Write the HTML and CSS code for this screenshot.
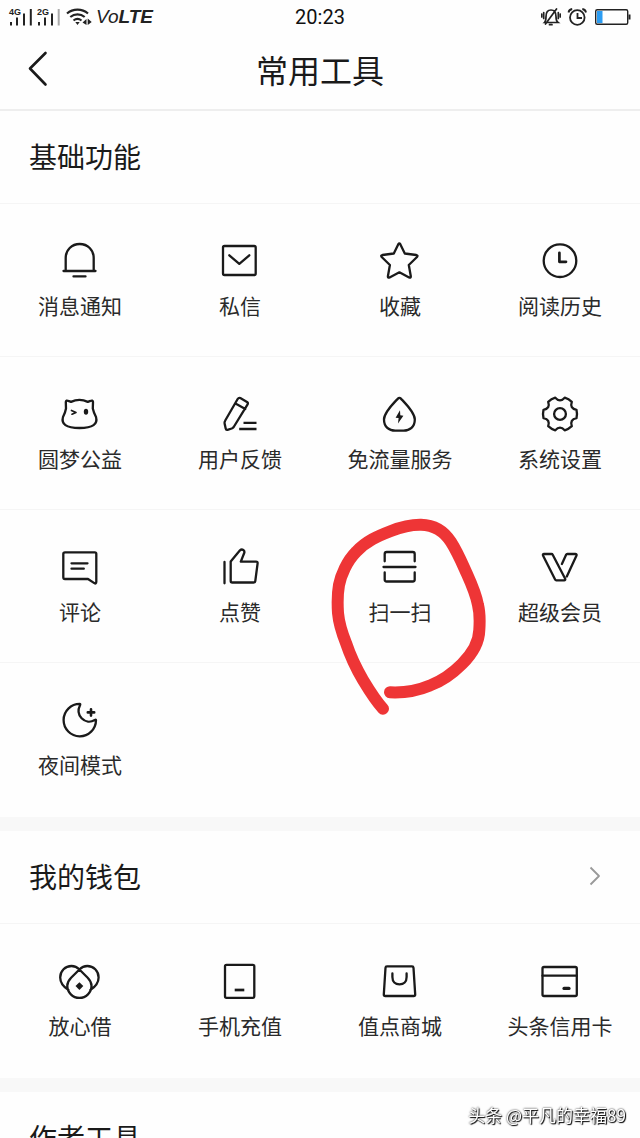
FILE: index.html
```html
<!DOCTYPE html>
<html lang="zh-CN">
<head>
<meta charset="utf-8">
<meta name="viewport" content="width=device-width, initial-scale=1">
<title>常用工具</title>
<link rel="stylesheet" href="styles.css">
</head>
<body>
<div class="screen">
  <div class="status">
    <div class="status-left">
      <svg class="signals" width="54" height="20" viewBox="8 6 54 20" aria-hidden="true">
        <path d="M11 21v3.500M17 16.500v8M24 12.500v12M30.800 8v16.500M39 21v3.500M45 16.500v8M52 12.500v12" stroke="#222" stroke-width="2"/>
        <path d="M58.700 8v16.500" stroke="#aaa" stroke-width="2"/>
        <text class="net" x="9" y="14">4G</text>
        <text class="net" x="37" y="14">2G</text>
      </svg>
      <svg width="26" height="20" viewBox="66 6 26 20" fill="none" stroke="#222" stroke-width="2.2" aria-hidden="true">
        <path d="M67 12.500C73 7.300 82 7.300 88 12.500M70.300 16C74.500 12.500 80.500 12.500 84.700 16M73.500 19.500C76 17.500 79 17.500 81.500 19.500"/>
        <path d="M75.300 21h4.400l-2.200 3zM82.500 21.500l4-3.500v6zM87.700 17.500l4 3.500-4 3z" fill="#222" stroke="none"/>
      </svg>
      <span class="volte">Vo<b>LTE</b></span>
    </div>
    <time class="clock">20:23</time>
    <div class="status-right">
      <svg width="20" height="20" viewBox="540 6 20 20" fill="none" stroke="#222" stroke-width="1.7" stroke-linecap="round" aria-hidden="true">
        <path d="M543.500 21.500h13.500c-2-1.500-2-3-2-6 0-4-2-6.500-5-6.500s-5 2.500-5 6.500c0 3 0 4.500-1.500 6zM555.500 8l-11 15M548.500 23.700h2.500M542.700 11.500v6M540.700 13v3M557.300 11.500v6M559.300 13v3"/>
      </svg>
      <svg width="20" height="20" viewBox="566 6 20 20" fill="none" stroke="#222" stroke-width="1.8" aria-hidden="true">
        <circle cx="576.3" cy="16.5" r="7.3"/>
        <path d="M576.500 12v5h4.500M567.500 11.500c.3-1.800 1.700-3.200 3.700-3.500M585 11.500c-.3-1.800-1.700-3.200-3.700-3.500"/>
      </svg>
      <svg class="battery" width="37" height="20" viewBox="595 6 37 20" aria-hidden="true">
        <rect x="595.7" y="8.7" width="32" height="14.6" rx="1.5" fill="none" stroke="#222" stroke-width="1.4"/>
        <path d="M597 10h5.500v12H597z" fill="#2b9cf2"/>
        <path d="M628.500 13.500h2v5h-2z" fill="#222"/>
      </svg>
    </div>
  </div>

  <header class="header">
    <button class="back" type="button" aria-label="返回">
      <svg width="20" height="36" viewBox="0 0 20 36" fill="none" stroke="#1a1a1a" stroke-width="2.6" stroke-linecap="round" stroke-linejoin="round"><path d="M17.500 2 2 17.500l15.500 16"/></svg>
    </button>
    <h1 class="title">常用工具</h1>
  </header>

  <main class="content">
    <section class="section">
      <h2 class="section-head">基础功能</h2>
      <div class="tiles">
        <a class="tile" href="#notice"><svg class="icon" viewBox="0 0 42 42"><path d="M6.700 31V18c0-8 6-14 14-14s14 6 14 14v13M4.500 31h32M14.500 36.400h12"/></svg><span>消息通知</span></a>
        <a class="tile" href="#message"><svg class="icon" viewBox="0 0 42 42"><rect x="4" y="6" width="32.7" height="29" rx="1.5"/><path d="m10.300 15.300 10 8.500 10-8.500"/></svg><span>私信</span></a>
        <a class="tile" href="#favorite"><svg class="icon" viewBox="0 0 42 42"><path d="M19.300 4.200q1-1.500 2 0l4.500 9.300 11.500 1.500q1.900.5.700 2L29.800 25l2 11.200q.1 1.900-1.700 1.200L20.400 32.300l-9.800 5.100q-1.800.7-1.700-1.200l2-11.200-8.200-8q-1.200-1.500.7-2l11.400-1.500z"/></svg><span>收藏</span></a>
        <a class="tile" href="#history"><svg class="icon" viewBox="0 0 42 42"><circle cx="21" cy="20.7" r="16.3"/><path d="M20.400 12.800v9H27" stroke-width="2.7"/></svg><span>阅读历史</span></a>
        <a class="tile" href="#charity"><svg class="icon" viewBox="0 0 42 42"><path d="M7 15.500 6.800 9q.5-2.200 2.500-1.100l2.700 1q8.400-4 16.800 0l2.700-1q2.100-1.100 2.500 1.100l-.2 6.500q1 4.500 3.200 8.500c2 7-3 11-16.500 11S2 31 4 24q2.200-4 3-8.500z"/><path d="m12.500 17.500 4.500 2-4 1.700" stroke-width="1.7"/><ellipse class="solid" cx="27" cy="18.8" rx="2.2" ry="3"/></svg><span>圆梦公益</span></a>
        <a class="tile" href="#feedback"><svg class="icon" viewBox="0 0 42 42"><path d="M18.800 5.800q1-1.500 2.500-.7L28 9q1.400 1 .6 2.400L14.700 34q-.7 1-2 1.500l-4.200 1.300q-1.500.3-1.800-1.200L5.600 30.500q-.3-1.500.5-2.700zM16.500 10.500l9.800 5.500"/><path d="M24.500 29.800h13M20.200 36h17.300" stroke-linecap="butt"/></svg><span>用户反馈</span></a>
        <a class="tile" href="#traffic"><svg class="icon" viewBox="0 0 42 42"><path d="M18.900 5.600q1.500-1.600 3 0C27 11 35.800 19.500 35.800 26.500c0 7.500-5 11.200-11.200 11.200h-8.400C10 37.700 5 34 5 26.500 5 19.500 13.800 11 18.900 5.600z"/><path class="solid" d="m21 17.300-4.400 7.400 3 .4-.6 5.400 5.400-7.700-3.100-.6z"/></svg><span>免流量服务</span></a>
        <a class="tile" href="#settings"><svg class="icon" viewBox="-21 -21 42 42"><path d="M16.500 4.100Q9.500 5.500 11.800 12.200A17 17 0 0 1 4.700 16.300Q0 11-4.700 16.300A17 17 0 0 1-11.800 12.200Q-9.500 5.500-16.500 4.100A17 17 0 0 1-16.500-4.100Q-9.500-5.500-11.800-12.200A17 17 0 0 1-4.700-16.300Q0-11 4.700-16.300A17 17 0 0 1 11.800-12.200Q9.500-5.500 16.500-4.100A17 17 0 0 1 16.500 4.100z"/><circle r="5.9"/></svg><span>系统设置</span></a>
        <a class="tile" href="#comment"><svg class="icon" viewBox="0 0 42 42"><path d="M6 6.300h29.800q1.500 0 1.500 1.500v28q0 2.500-2 1.300L29 33H6q-1.700 0-1.700-1.700V8Q4.300 6.300 6 6.300zM12.500 17.300h16M12.500 22.700h12.300"/></svg><span>评论</span></a>
        <a class="tile" href="#like"><svg class="icon" viewBox="0 0 42 42"><path d="M5.500 16v21.300M11.700 15.500 21 4.300q1.600-1.500 3.300-.3 1.500 1 1 2.800l-3.500 8.800h15.200q1.800 0 1.600 1.800L36.300 35q-.2 1.500-1.700 1.500H13.200q-1.500 0-1.500-1.500z"/></svg><span>点赞</span></a>
        <a class="tile" href="#scan"><svg class="icon" viewBox="0 0 42 42"><path d="M5.700 15.300V8q0-2 2-2h26q2 0 2 2v7.300M4.500 21h32M5.700 26.500v7q0 2 2 2h26q2 0 2-2v-7"/></svg><span>扫一扫</span>
          <svg class="mark" width="166" height="210" viewBox="0 0 166 210" aria-hidden="true"><path d="M70 182.300C84 183 97 181 110 175.500C122 171 133 163 142 154C152 144 159 133 159.300 120C160 110 160 103 158 95C156 84 152 75 147 64C142 53 138 43 131 32C124 21 115 15 101 14.700C91 14.500 81 17 71 21C58 26 46 31 36 42C27 51 21 65 19 75C17 86 17.500 95 18 103C19 114 22 123 26 133C30 145 36 158 43 170C49 180 55 190 63 198.700" fill="none" stroke="#ee3536" stroke-width="12" stroke-linecap="round" stroke-linejoin="round"/></svg>
        </a>
        <a class="tile" href="#vip"><svg class="icon" viewBox="0 0 42 42"><path d="M5 8h7.500q.8 0 1.200.8l12.500 24q.4 1.500-1 1.500h-7.900q-.8 0-1.200-.8L4 9.500Q3.500 8 5 8zM22.900 18l4.200-9.200q.3-.8 1.200-.8h8q1.800 0 1.200 1.500L27.800 30.500"/></svg><span>超级会员</span></a>
        <a class="tile" href="#night"><svg class="icon" viewBox="0 0 42 42"><path d="M20.800 4.900A16.200 16.200 0 1 0 37 21.300c0-.8-.6-.6-1.200-.3-4.300 2.500-9.500 2.200-13.200-1.700-3.500-3.800-3.700-8.800-1.600-13 .3-.8.500-1.300-.2-1.400z"/><path d="M32 10.200v6.400M28.800 13.400h6.400" stroke-width="2.6"/></svg><span>夜间模式</span></a>
      </div>
    </section>

    <section class="section">
      <h2 class="section-head"><a class="section-link" href="#wallet">我的钱包<svg width="12" height="20" viewBox="0 0 12 20" fill="none" stroke="#999" stroke-width="1.8" stroke-linejoin="round" aria-hidden="true"><path d="m1.500 1.500 8.500 8.500-8.500 8.500"/></svg></a></h2>
      <div class="tiles">
        <a class="tile" href="#loan"><svg class="icon" viewBox="0 0 42 42"><path d="M9.500 30C4 26.500 1.200 22 1.200 17.500 1.200 11 6.300 6 12.500 6c3.500 0 6 1.500 7.900 3.500l8.300 8.300c2.600 2.700 3.800 5.300 3.800 8a12.100 12.100 0 0 1-24.200 0c0-2.700 1.200-5.300 3.800-8l8.300-8.300C22.300 7.500 24.800 6 28.300 6c6.200 0 11.300 5 11.300 11.500 0 4.500-2.800 9-8.300 12.500"/><path class="solid" d="m20.400 22.200 3.900 3.900-3.900 3.900-3.900-3.900z"/></svg><span>放心借</span></a>
        <a class="tile" href="#recharge"><svg class="icon" viewBox="0 0 42 42"><rect x="6" y="4.8" width="29.3" height="33" rx="1.5"/><path d="M15.700 30h9.600" stroke-width="2.7" stroke-linecap="butt"/></svg><span>手机充值</span></a>
        <a class="tile" href="#mall"><svg class="icon" viewBox="0 0 42 42"><path d="M8 6.400h25q1.400 0 1.500 1.400l1.700 26.700q0 1.500-1.500 1.500H6.300q-1.500 0-1.500-1.500L6.500 7.800Q6.600 6.400 8 6.400zM13.400 13.500V17c0 4.600 2.800 7.400 7.100 7.400s7.100-2.800 7.100-7.400v-3.500"/></svg><span>值点商城</span></a>
        <a class="tile" href="#card"><svg class="icon" viewBox="0 0 42 42"><rect x="3.5" y="7" width="34.3" height="29" rx="1.5"/><path d="M3.500 15.700h34.300"/><path d="M25 28.400h5" stroke-width="3.2"/></svg><span>头条信用卡</span></a>
      </div>
    </section>

    <section class="section">
      <h2 class="section-head">作者工具</h2>
    </section>
  </main>
  <div class="watermark">头条 @平凡的幸福89</div>
</div>
</body>
</html>
```

FILE: styles.css
```css
* {
  box-sizing: border-box;
}

body {
  margin: 0;
  background: #fefefe;
  color: #1a1a1a;
  font-family: "Noto Sans CJK SC", "Noto Sans", sans-serif;
}

a {
  color: inherit;
  text-decoration: none;
}

.screen {
  display: flex;
  flex-direction: column;
  height: 100vh;
}

.status {
  display: grid;
  grid-template-columns: 1fr auto 1fr;
  align-items: center;
  flex: none;
  height: 33px;
  padding: 0 8px;
}

.status-left,
.status-right {
  display: flex;
  align-items: center;
  gap: 4px;
}

.status-right {
  justify-content: flex-end;
  gap: 6px;
}

.battery {
  margin-left: 2px;
}

.net {
  font: bold 9px "Liberation Sans", sans-serif;
  fill: #222;
}

.volte {
  font: italic 19px/20px "Liberation Sans", sans-serif;
  color: #222;
}

.clock {
  font: 20px/24px Roboto, sans-serif;
  color: #111;
}

.header {
  display: grid;
  grid-template-columns: 48px 1fr 48px;
  align-items: center;
  flex: none;
  padding: 12px 16px 16px;
  border-bottom: 2px solid #eeeeee;
}

.back {
  display: flex;
  align-items: center;
  height: 48px;
  padding: 0 12px;
  border: 0;
  background: none;
}

.title {
  margin: 0;
  font-size: 32px;
  font-weight: 400;
  line-height: 48px;
  text-align: center;
}

.content {
  flex: 1;
  min-height: 0;
  overflow-y: auto;
  scrollbar-width: none;
}

.section + .section {
  border-top: 14px solid #f8f8f8;
}

.section-head {
  margin: 0;
  padding: 23px 29px 25px;
  border-bottom: 1px solid #f5f5f5;
  font-size: 28px;
  font-weight: 400;
  line-height: 44px;
}

.section-link {
  display: flex;
  align-items: center;
  justify-content: space-between;
  padding-right: 10px;
}

.tiles {
  display: grid;
  grid-template-columns: repeat(4, 1fr);
}

.tile {
  position: relative;
  display: flex;
  flex-direction: column;
  align-items: center;
  gap: 8px;
  padding: 36px 0;
  border-bottom: 1px solid #f5f5f5;
  color: #2a2a2a;
  font-size: 21px;
  line-height: 30px;
  white-space: nowrap;
}

.tile:nth-child(4n + 1):nth-last-child(-n + 4),
.tile:nth-child(4n + 1):nth-last-child(-n + 4) ~ .tile {
  padding-bottom: 38px;
  border-bottom: 0;
}

.icon {
  width: 42px;
  height: 42px;
  fill: none;
  stroke: #1a1a1a;
  stroke-width: 2.3px;
  stroke-linecap: round;
  stroke-linejoin: round;
}

.solid {
  fill: #1a1a1a;
  stroke: none;
}

.mark {
  position: absolute;
  z-index: 1;
  top: 0;
  left: calc(50% - 80px);
  pointer-events: none;
}

.watermark {
  position: fixed;
  right: 14px;
  bottom: 11px;
  color: #ffffff;
  font-size: 17px;
  line-height: 24px;
  text-shadow: 1px 1px 1px #000000, 0 0 2px #000000;
}
```
